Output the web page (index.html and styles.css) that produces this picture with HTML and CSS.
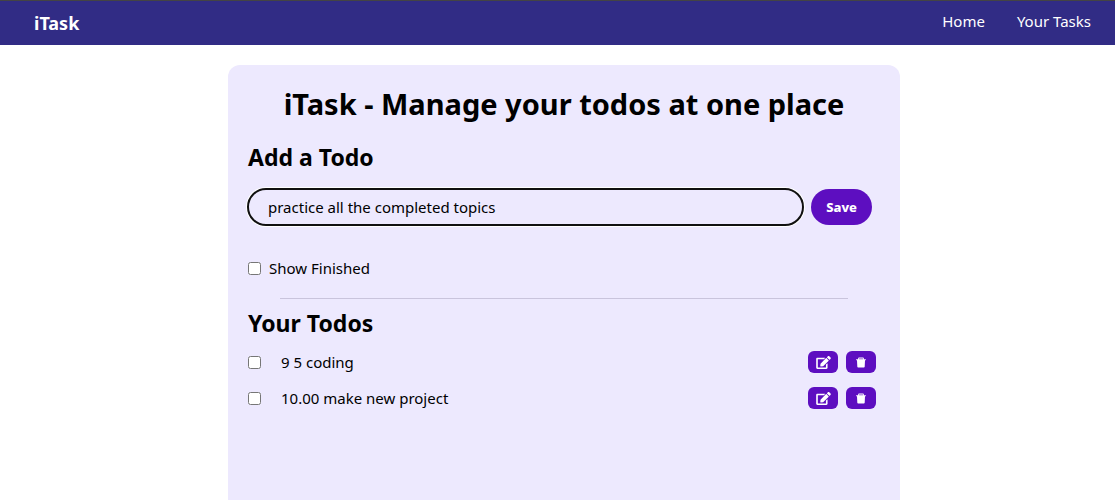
FILE: index.html
```html
<!DOCTYPE html>
<html lang="en">
<head>
<meta charset="utf-8">
<meta name="viewport" content="width=device-width, initial-scale=1">
<title>iTask</title>
<link rel="stylesheet" href="styles.css">
</head>
<body>
<svg class="sprite" aria-hidden="true">
  <symbol id="icon-edit" viewBox="0 0 576 512"><path d="M402.6 83.2l90.2 90.2c3.8 3.8 3.8 10 0 13.8L274.4 405.6l-92.8 10.3c-12.4 1.4-22.9-9.1-21.5-21.5l10.3-92.8L388.8 83.2c3.8-3.8 10-3.8 13.8 0zm162-22.9l-48.8-48.8c-15.2-15.2-39.9-15.2-55.2 0l-35.4 35.4c-3.8 3.8-3.8 10 0 13.8l90.2 90.2c3.8 3.8 10 3.8 13.8 0l35.4-35.4c15.2-15.3 15.2-40 0-55.2zM384 346.2V448H64V128h229.8c3.2 0 6.2-1.3 8.5-3.5l40-40c7.6-7.6 2.2-20.5-8.5-20.5H48C21.5 64 0 85.5 0 112v352c0 26.5 21.5 48 48 48h352c26.5 0 48-21.5 48-48V306.2c0-10.7-12.9-16-20.5-8.5l-40 40c-2.2 2.3-3.5 5.3-3.5 8.5z"/></symbol>
  <symbol id="icon-delete" viewBox="0 0 1024 1024"><path opacity=".65" d="M360 184h304v72H360z"/><path d="M864 256H736v-80c0-35.3-28.7-64-64-64H352c-35.3 0-64 28.7-64 64v80H160c-17.7 0-32 14.3-32 32v32c0 4.4 3.6 8 8 8h60.4l24.7 523c1.6 34.1 29.8 61 63.9 61h454c34.2 0 62.3-26.8 63.9-61l24.7-523H888c4.4 0 8-3.6 8-8v-32c0-17.7-14.3-32-32-32zm-200 0H360v-72h304v72z"/></symbol>
</svg>
<nav class="navbar">
  <span class="brand">iTask</span>
  <ul class="nav-links">
    <li><a href="#home">Home</a></li>
    <li><a href="#tasks">Your Tasks</a></li>
  </ul>
</nav>
<main class="page">
  <div class="card">
    <h1 class="title">iTask - Manage your todos at one place</h1>
    <h2 class="heading"><label for="todo">Add a Todo</label></h2>
    <form class="add-form">
      <input class="todo-input" id="todo" type="text" value="practice all the completed topics">
      <button class="save" type="button">Save</button>
    </form>
    <div class="filter">
      <input class="check" id="show" type="checkbox">
      <label for="show">Show Finished</label>
    </div>
    <hr class="rule">
    <h2 class="heading">Your Todos</h2>
    <ul class="todos">
      <li class="todo">
        <input class="check" id="todo-1" type="checkbox">
        <label class="todo-text" for="todo-1">9 5 coding</label>
        <button class="action" type="button" aria-label="Edit"><svg class="icon-edit"><use href="#icon-edit"/></svg></button>
        <button class="action" type="button" aria-label="Delete"><svg class="icon-delete"><use href="#icon-delete"/></svg></button>
      </li>
      <li class="todo">
        <input class="check" id="todo-2" type="checkbox">
        <label class="todo-text" for="todo-2">10.00 make new project</label>
        <button class="action" type="button" aria-label="Edit"><svg class="icon-edit"><use href="#icon-edit"/></svg></button>
        <button class="action" type="button" aria-label="Delete"><svg class="icon-delete"><use href="#icon-delete"/></svg></button>
      </li>
    </ul>
  </div>
</main>
</body>
</html>
```
FILE: styles.css
```css
* { box-sizing: border-box; }

body {
  margin: 0;
  min-height: 100vh;
  display: flex;
  flex-direction: column;
  background: #fff;
  color: #000;
  font: 15px/24px "Segoe UI", "Noto Sans", sans-serif;
}

h1, h2, ul { margin: 0; padding: 0; }
ul { list-style: none; }
button, input { font: inherit; color: inherit; }
.sprite { display: none; }

.navbar {
  display: flex;
  justify-content: space-between;
  padding: 8px 24px 8px 34px;
  border-top: 1px solid #444;
  background: #312c85;
  color: #fff;
}
.brand { font-size: 18px; line-height: 28px; font-weight: 700; }
.nav-links { display: flex; gap: 32px; }
.nav-links a { color: inherit; text-decoration: none; }

.page {
  flex: 1;
  display: flex;
  justify-content: center;
  padding: 20px 0 0 13px;
}
.card {
  flex: 1;
  max-width: 672px;
  padding: 20px;
  border-radius: 12px 12px 0 0;
  background: #ede9fe;
}
.title { font-size: 29px; line-height: 38px; font-weight: 700; text-align: center; }
.heading { font-size: 23px; line-height: 32px; font-weight: 700; }
.title + .heading { margin-top: 18px; }

.add-form { display: flex; gap: 8px; margin: 16px 8px 31px 0; }
.todo-input {
  flex: 1;
  min-width: 0;
  height: 36px;
  padding: 0 20px;
  border: 0;
  border-radius: 18px;
  outline: 2px solid #101010;
  outline-offset: -1px;
  box-shadow: 0 0 0 2px #fff;
  background: transparent;
}
.save {
  height: 36px;
  padding: 0 15px;
  border: 0;
  border-radius: 18px;
  background: #5d0ec0;
  color: #fff;
  font-size: 13px;
  font-weight: 800;
}

.check { width: 13px; height: 13px; margin: 0; }
.filter { display: flex; align-items: center; gap: 8px; }
.rule {
  height: 1px;
  margin: 18px 32px 8px;
  border: 0;
  background: #c9c4dc;
}

.todos { display: grid; gap: 12px; margin: 11px 4px 0 0; }
.todo { display: flex; align-items: center; gap: 8px; }
.todo-text { flex: 1; margin-left: 12px; }
.action {
  display: flex;
  align-items: center;
  justify-content: center;
  width: 30px;
  height: 22px;
  padding: 0;
  border: 0;
  border-radius: 6px;
  background: #5d0ec0;
}
.icon-edit, .icon-delete { height: 13px; fill: #fff; }
.icon-edit { width: 15px; }
.icon-delete { width: 14px; }
```
